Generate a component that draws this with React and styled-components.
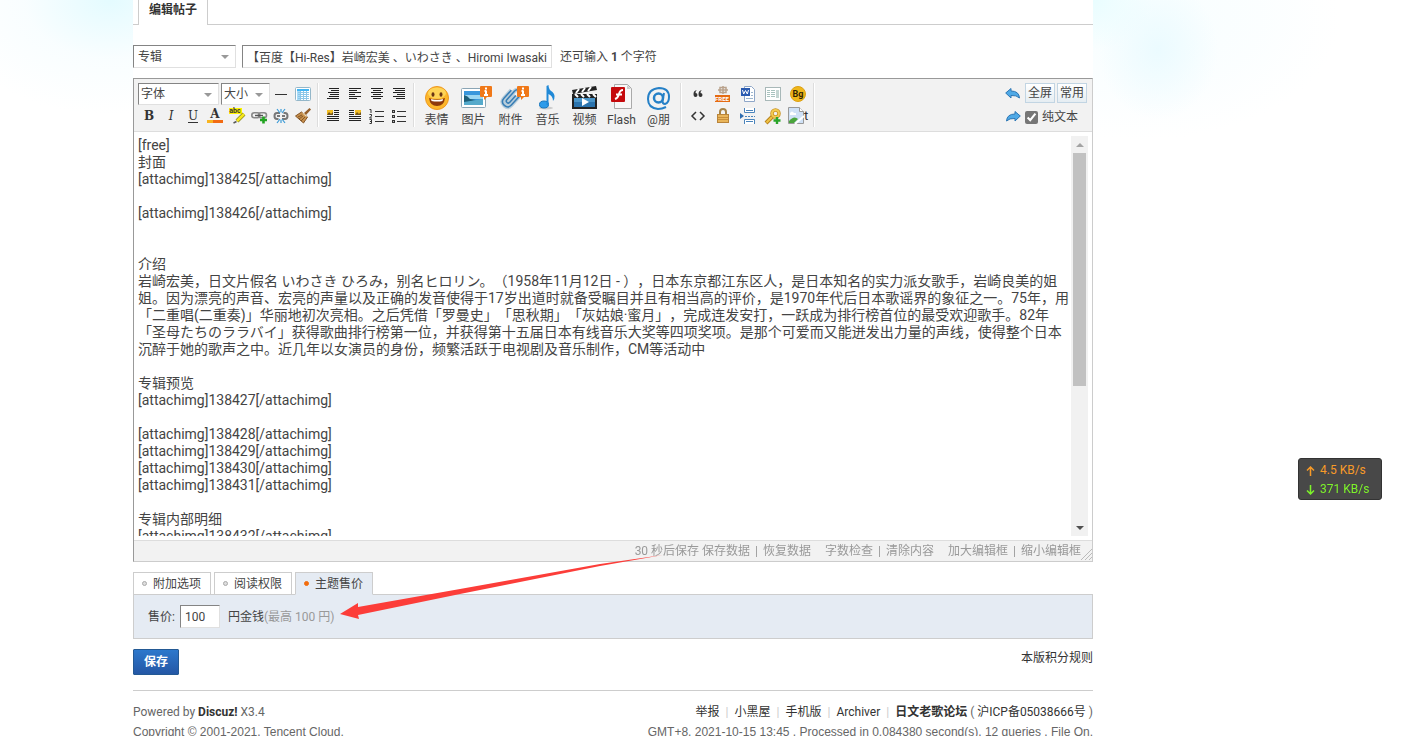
import React from 'react';
import styled, { createGlobalStyle, css } from 'styled-components';

const GlobalStyle = createGlobalStyle`
  *, *::before, *::after { box-sizing: border-box; }
  body {
    margin: 0;
    color: #444;
    font: 12px/18px Roboto, "Noto Sans CJK SC", sans-serif;
    text-spacing-trim: space-all;
    background:
      radial-gradient(ellipse 170px 115px at 110px 0, #e4fbff, rgba(246, 253, 255, 0.7) 50%, transparent) no-repeat,
      radial-gradient(ellipse 60px 50px at 1093px 0, #e9fdff, transparent) no-repeat,
      radial-gradient(ellipse 60px 70px at 1158px 50px, rgba(232, 250, 255, 0.8), transparent) no-repeat,
      radial-gradient(ellipse 200px 120px at 1140px 20px, #f7feff, rgba(250, 254, 255, 0.8) 60%, transparent) no-repeat,
      #fff;
  }
  button, input, select, textarea { font: inherit; color: inherit; margin: 0; text-spacing-trim: inherit; }
  a { color: inherit; text-decoration: none; }
`;

const Page = styled.main`
  position: relative;
  margin: 0 320px 0 133px;
  background: #fff;
`;

const TopTabs = styled.nav`
  display: flex;
  height: 25px;
  padding-left: 5px;
  border-bottom: 1px solid #cdcdcd;
`;

const TopTab = styled.a`
  height: 25px;
  padding: 1px 10px 0;
  border: solid #cdcdcd;
  border-width: 0 1px;
  background: #fff;
  color: #333;
  font-weight: 700;
`;

const sunken = css`
  border: 1px solid;
  border-color: #848484 #e0e0e0 #e0e0e0 #848484;
  background: #fff;
  outline: 0;
`;

const TitleRow = styled.div`
  display: flex;
  align-items: center;
  gap: 6px;
  margin: 20px 0 10px;
`;

const SelectBox = styled.span`
  position: relative;
  flex: none;
  width: ${(p) => p.$width}px;
  height: ${(p) => p.$height}px;
  &::after {
    content: "";
    position: absolute;
    right: 7px;
    top: 10px;
    border: 4px solid transparent;
    border-top-color: #999;
    border-bottom: 0;
    pointer-events: none;
  }
`;

const Select = styled.select`
  ${sunken}
  display: block;
  width: 100%;
  height: 100%;
  padding: 0 ${(p) => (p.$tight ? 2 : 4)}px;
  appearance: none;
  border-radius: 0;
`;

const TextInput = styled.input`
  ${sunken}
  width: ${(p) => p.$width}px;
  height: 23px;
  padding: 0 4px;
`;

const Remaining = styled.span`
  margin-left: 2px;
`;

const Editor = styled.section`
  border: 1px solid;
  border-color: #999 #ccc #ccc #999;
`;

const Toolbar = styled.div`
  display: flex;
  height: 53px;
  padding: 4px 5px 4px 4px;
  background: #f2f2f2;
  border-bottom: 1px solid #ddd;
`;

const Group = styled.div`
  display: grid;
  grid-template-columns: repeat(${(p) => p.$cols}, ${(p) => p.$cell}px);
  grid-template-rows: 22px 22px;
  flex: none;
`;

const FontRow = styled.div`
  display: flex;
  gap: 2px;
  grid-column: span 6;
`;

const Divider = styled.span`
  flex: none;
  width: 2px;
  margin: 0 3px;
  border-left: 1px solid #ddd;
  border-right: 1px solid #fff;
`;

const Tool = styled.button`
  display: flex;
  align-items: center;
  justify-content: center;
  min-width: 0;
  padding: 0;
  border: 0;
  background: none;
  svg { display: block; flex: none; overflow: visible; }
`;

const BigTool = styled(Tool)`
  flex-direction: column;
  justify-content: flex-start;
  grid-row: span 2;
  height: 44px;
  line-height: 14px;
  white-space: nowrap;
  svg { margin: 1px 0 3px; }
`;

const ToolbarEnd = styled.div`
  display: grid;
  grid-template-columns: 20px 30px 30px;
  grid-template-rows: 20px 20px;
  gap: 4px 2px;
  margin-left: auto;
`;

const ViewButton = styled.button`
  padding: 0;
  border: 1px solid #c2d5e3;
  background: linear-gradient(#fff, #e5edf2);
  line-height: 18px;
  white-space: nowrap;
`;

const PlainText = styled.label`
  display: flex;
  align-items: center;
  gap: 4px;
  grid-column: span 2;
  white-space: nowrap;
  input { width: 13px; height: 13px; accent-color: #767676; }
`;

const Area = styled.div`
  display: flex;
  height: 408px;
  padding: 4px;
  background: #fff;
`;

const Message = styled.textarea`
  flex: 1;
  min-width: 0;
  padding: 1px 0 0;
  border: 0;
  outline: 0;
  resize: none;
  overflow: auto;
  scrollbar-width: none;
  white-space: pre;
  font-size: 14px;
  line-height: 17px;
`;

const ScrollTrack = styled.div`
  display: flex;
  flex-direction: column;
  width: 17px;
  background: #f1f1f1;
  &::before, &::after {
    content: "";
    width: 8px;
    margin: 7px auto 6px;
    border: 4px solid transparent;
    border-top: 0;
    border-bottom-color: #a3a3a3;
  }
  &::after {
    margin-top: auto;
    border-top: 4px solid #505050;
    border-bottom: 0;
  }
`;

const ScrollThumb = styled.div`
  width: 13px;
  height: 233px;
  margin: 0 auto;
  background: #c1c1c1;
`;

const StatusBar = styled.div`
  display: flex;
  justify-content: flex-end;
  gap: 14px;
  height: 21px;
  padding: 1px 0 0;
  border-top: 1px solid #ddd;
  background: #f2f2f2;
  color: #999;
  svg { align-self: flex-end; margin-left: -14px; }
`;

const Piped = styled.span`
  display: flex;
  gap: 5px;
`;

const SaveState = styled.span`
  margin-right: -2px;
`;

const OptionTabs = styled.div`
  display: flex;
  gap: 3px;
  margin-top: 10px;
`;

const OptionTab = styled.button`
  display: flex;
  align-items: center;
  width: 78px;
  height: 23px;
  margin-bottom: -1px;
  padding: 0 8px;
  gap: 6px;
  z-index: 1;
  border: 1px solid #cdcdcd;
  border-bottom-color: ${(p) => (p.$active ? '#e5ebf3' : '#cdcdcd')};
  background: ${(p) => (p.$active ? '#e5ebf3' : '#fff')};
  white-space: nowrap;
  &::before {
    content: "";
    flex: none;
    width: 5px;
    height: 5px;
    border-radius: 50%;
    border: 1px solid ${(p) => (p.$active ? '#f26c0d' : '#aaa')};
    background: ${(p) => (p.$active ? '#f26c0d' : '#ddd')};
  }
`;

const OptionPanel = styled.div`
  display: flex;
  align-items: center;
  gap: 5px;
  height: 45px;
  padding: 0 14px;
  border: 1px solid #cdcdcd;
  background: #e5ebf3;
`;

const PriceUnit = styled.span`
  margin-left: 3px;
`;

const Muted = styled.span`
  color: #999;
`;

const SaveRow = styled.div`
  display: flex;
  justify-content: space-between;
  margin: 10px 0 15px;
  color: #333;
`;

const SaveButton = styled.button`
  width: 46px;
  height: 26px;
  padding: 0;
  border: 1px solid #235994;
  border-radius: 1px;
  background: linear-gradient(#2d78cc, #2457a5);
  color: #fff;
  font-weight: 700;
`;

const Footer = styled.footer`
  display: flex;
  justify-content: space-between;
  height: 46px;
  padding-top: 11px;
  border-top: 1px solid #cdcdcd;
  color: #666;
  line-height: 20px;
  overflow: hidden;
  p { margin: 0; }
  b, a { color: #333; }
`;

const FootRight = styled.div`
  text-align: right;
`;

const Pipe = styled.span`
  margin: 0 6px;
  color: #ccc;
`;

const SmallPrint = styled.p`
  font-family: "Liberation Sans", sans-serif;
`;

const Pointer = styled.svg`
  position: absolute;
  left: 207px;
  top: 550px;
  z-index: 2;
  pointer-events: none;
`;

const NetSpeed = styled.aside`
  position: fixed;
  right: 31px;
  top: 458px;
  width: 84px;
  height: 42px;
  padding: 2px 7px;
  border: 1px solid #333;
  border-radius: 3px;
  background: #484848;
  line-height: 19px;
`;

const SpeedRow = styled.div`
  display: flex;
  align-items: center;
  gap: 5px;
  color: ${(p) => p.$color};
  white-space: nowrap;
`;

const Svg = ({ w = 16, h = 16, children }) => (
  <svg width={w} height={h} viewBox={`0 0 ${w} ${h}`} fill="none" aria-hidden="true">{children}</svg>
);

const Lines = ({ rows, children }) => (
  <Svg>
    <path stroke="#222" d={rows.map(([x, w], i) => `M${x} ${2.5 + i * 2}h${w}`).join('')} />
    {children}
  </Svg>
);

const serif = { fontFamily: '"DejaVu Serif", serif' };

const Letter = ({ children, ...rest }) => (
  <text x="8" y="12" textAnchor="middle" fontSize="12" fontWeight="700" fill="#333" style={serif} {...rest}>{children}</text>
);

const RuleIcon = () => <Svg><path stroke="#333" d="M2 8.5h12" /></Svg>;

const TableIcon = () => (
  <Svg>
    <rect x=".5" y="1.5" width="15" height="13" rx="1" fill="#fff" stroke="#94b7c9" />
    <path fill="#43b5f3" d="M2 3h12v2H2z" /><path fill="#a9dcf8" d="M2 5h3v9H2z" />
    <path stroke="#8cc6e8" d="M5.500 5v9M8.500 5v9M11.500 5v9M3 6.500h11M3 8.500h11M3 10.500h11M3 12.500h11" />
  </Svg>
);

const BoldIcon = () => <Svg><Letter>B</Letter></Svg>;
const ItalicIcon = () => <Svg><Letter fontStyle="italic" fontWeight="400">I</Letter></Svg>;
const UnderlineIcon = () => <Svg><Letter y="12" fontWeight="400">U</Letter><path stroke="#333" d="M3 14.500h10" /></Svg>;

const ColorIcon = () => (
  <Svg>
    <Letter y="10">A</Letter>
    <path fill="#f8b420" d="M0 12h8v3H0z" /><path fill="#f26b13" d="M6 12h10v3H6z" />
  </Svg>
);

const HighlightIcon = () => (
  <Svg>
    <path fill="#fff200" d="M0 0h13v6H0z" />
    <text x="6" y="5" textAnchor="middle" fontSize="7" fontWeight="700" fill="#333">abc</text>
    <path stroke="#8a8a20" strokeWidth="4" d="M15 6l-7 7" />
    <path stroke="#f6e71c" strokeWidth="2.500" d="M15 6l-7 7" />
    <path stroke="#555" strokeWidth="1.500" d="M7.500 13.500l-3 1.500" />
  </Svg>
);

const LinkIcon = () => (
  <Svg>
    <rect x=".8" y="4.800" width="8" height="5" rx="2.500" stroke="#888" strokeWidth="1.600" />
    <rect x="7.500" y="4.800" width="8" height="5" rx="2.500" stroke="#888" strokeWidth="1.600" />
    <path stroke="#555" strokeWidth="1.400" d="M4 7.500h8" />
    <path stroke="#21a321" strokeWidth="2.600" d="M12.500 8.500v7M9 12h7" />
  </Svg>
);

const UnlinkIcon = () => (
  <Svg>
    <path stroke="#777" strokeWidth="2" d="M7 5H4Q1.500 5 1.500 8T4 11h1.500M4 8h3M9 11h3q2.500 0 2.500-3T12 5h-1.500M9 8h3" />
    <path stroke="#3c9bd6" strokeWidth="1.200" d="M4 1l3 4M8 1v3M12 1L9 5M4 15l3-4M8 15v-3M12 15l-3-4" />
  </Svg>
);

const BrushIcon = () => (
  <Svg>
    <path fill="#96602b" d="M14.500 0L16 1.500 11 7 9 5z" />
    <path fill="#c78f4b" stroke="#845425" d="M6.500 4l6 5-4 6-8-7z" />
    <path stroke="#fff0c4" d="M7.500 5l4 3.500" /><path stroke="#66401b" strokeWidth=".7" d="M7 7l-4 2M8 8l-4 3M10 9l-4 4" />
  </Svg>
);

const AutoIcon = () => <Lines rows={[[4, 10], [6, 8], [3, 11], [5, 9], [4, 10], [2, 12]]} />;
const LeftIcon = () => <Lines rows={[[2, 12], [2, 8], [2, 12], [2, 6], [2, 12], [2, 8]]} />;
const CenterIcon = () => <Lines rows={[[2, 12], [4, 8], [2, 12], [4, 8], [2, 12], [4, 8]]} />;
const RightIcon = () => <Lines rows={[[2, 12], [4, 10], [2, 12], [6, 8], [2, 12], [5, 9]]} />;

const FloatIcon = ({ x }) => (
  <Lines rows={[[2, 12], [2, 12], [2, 12], [2, 12], [2, 12], [2, 12]]}>
    <path fill="#f2f2f2" d={`M${x - 1} 1h8v7h-8z`} />
    <path fill="#f3be22" d={`M${x} 2h6v5h-6z`} /><path fill="#72541b" d={`M${x} 7l2-3 2 2 2-2v3z`} />
  </Lines>
);

const OrderedIcon = () => (
  <Svg>
    <path stroke="#333" d="M6 3.500h9M6 8.500h9M6 13.500h9" />
    <path stroke="#333" d="M.5 1.500h1.500V5M.5 6.500h2v1.500l-2 2h2.500M.5 11.500h2v4h-2M1 13.500h1.500" />
  </Svg>
);

const BulletIcon = () => (
  <Svg>
    <path stroke="#333" d="M6 3.500h9M6 8.500h9M6 13.500h9" />
    <path fill="#333" d="M1 2h3v3H1zM1 7h3v3H1zM1 12h3v3H1z" /><path fill="#bbb" d="M2 3h1v1H2zM2 8h1v1H2zM2 13h1v1H2z" />
  </Svg>
);

const Badge = ({ x, y }) => (
  <g transform={`translate(${x} ${y})`}>
    <path fill="#f07818" d="M1 0h10q1 0 1 1v9q0 1-1 1H7l-3 3v-3H1q-1 0-1-1V1q0-1 1-1z" />
    <path stroke="#fff" strokeWidth="2" d="M6 1.500v2M6 4.500V9M4.500 5H6M4 9h4" />
  </g>
);

const SmileIcon = () => (
  <Svg w={26} h={26}>
    <circle cx="13" cy="14" r="11.500" fill="#fcb72b" stroke="#ef9820" />
    <ellipse cx="13" cy="9" rx="9" ry="5.500" fill="#ffe06b" opacity=".7" />
    <ellipse cx="9" cy="10.500" rx="1.500" ry="2.300" fill="#693414" /><ellipse cx="17" cy="10.500" rx="1.500" ry="2.300" fill="#693414" />
    <path fill="#8e3a0c" d="M5 14q8 3 16 0-1 8-8 8t-8-8z" /><path fill="#fff" d="M7 15q6 2 12 0l-.5 2q-5 1-11 0z" />
  </Svg>
);

const PictureIcon = () => (
  <Svg w={26} h={26}>
    <rect x=".5" y="4.500" width="24" height="19" rx="1" fill="#fff" stroke="#8aa5b5" />
    <path fill="#3896dc" d="M3 7h19v14H3z" /><path fill="#9bd6f2" d="M3 11h19v4H3z" />
    <path fill="#1d5f79" d="M3 11q4 1 6 4l6 1-12 3z" /><path fill="#55aacb" d="M3 18l19-3v6H3z" />
    <Badge x={19} y={2} />
  </Svg>
);

const ClipIcon = () => (
  <Svg w={26} h={26}>
    <g transform="rotate(42 13 14)" strokeWidth="2">
      <path stroke="#b9cedb" strokeWidth="4" d="M8 8v11q0 5 5 5t5-5V7q0-4-3.500-4T11 7v11q0 2 2 2t2-2V9" />
      <path stroke="#367db5" strokeWidth="1.500" d="M8 8v11q0 5 5 5t5-5V7q0-4-3.500-4T11 7v11q0 2 2 2t2-2V9" />
    </g>
    <Badge x={19} y={2} />
  </Svg>
);

const MusicIcon = () => (
  <Svg w={26} h={26}>
    <ellipse cx="11" cy="24" rx="7" ry="1.500" fill="#ccc" />
    <ellipse cx="9" cy="20.500" rx="4.500" ry="3.500" fill="#2d9bea" stroke="#1776bd" />
    <path fill="#2089d7" d="M11.500 2l2-1q0 5 4 7 4 4 .5 9 0-5-4.500-7v11h-2z" />
  </Svg>
);

const VideoIcon = () => (
  <Svg w={26} h={26}>
    <path fill="#222" d="M0 6l24-4 1 4L1 10z" /><path fill="#222" d="M0 10h25v15H0z" />
    <path stroke="#fff" strokeWidth="2" d="M4 9l3-4M10 8l3-4M16 7l3-4M3 10l3 3M9 10l3 3M15 10l3 3M21 10l3 3" />
    <path fill="#2b74ae" d="M2 14h21v9H2z" /><path fill="#69b5e3" d="M2 14h21v4H2z" opacity=".5" />
    <path fill="#fff" d="M10 14l7 4-7 4z" />
  </Svg>
);

const FlashIcon = () => (
  <Svg w={26} h={26}>
    <path fill="#f8f8f8" stroke="#aaa" d="M5.500.500h13l4 4v20h-17z" /><path fill="#ccc" d="M18 1v4h4z" />
    <rect x="2" y="3" width="14" height="15" rx="1" fill="#c50a0d" />
    <path stroke="#fff" strokeWidth="2" d="M14 6q-3 0-4 4t-4 5M7 10.500h6" />
  </Svg>
);

const AtIcon = () => (
  <Svg w={26} h={26}>
    <g stroke="#2580c7">
      <circle cx="12.500" cy="14" r="4.500" strokeWidth="2.500" />
      <path strokeWidth="2" d="M18 9l-1.500 8q0 3 2.500 3 4-1 4-7 0-9-10-9Q2 5 2 15q0 9 10 10 4 0 8-2" />
    </g>
  </Svg>
);

const QuoteIcon = () => <Svg><path fill="#333" d="M7 4Q5.500 4.500 5.500 7q2 0 2 2T5.500 11 3.500 8Q3.500 4.500 7 4zM12 4q-1.500.500-1.500 3 2 0 2 2t-2 2-2-3Q8.500 4.500 12 4z" /></Svg>;
const CodeIcon = () => <Svg><path stroke="#333" strokeWidth="1.500" d="M6 4L2 8l4 4M10 4l4 4-4 4" /></Svg>;

const FreeIcon = () => (
  <Svg>
    <path stroke="#b9a28c" strokeWidth="1.500" d="M5 1.500h6v5H5zM3 4h10M8 0v8" />
    <rect x="0" y="9" width="15" height="7" fill="#e56a12" />
    <text x="7" y="15" textAnchor="middle" fontSize="6" fontWeight="700" fill="#fff">FREE</text>
  </Svg>
);

const LockIcon = () => (
  <Svg>
    <path stroke="#a78347" strokeWidth="2" d="M5 7V4q0-3 3-3t3 3v3" />
    <rect x="2.500" y="6.500" width="11" height="8" fill="#e9b55a" stroke="#b9843a" />
    <path stroke="#c88e3c" d="M3 9.500h10M3 11.500h10" />
  </Svg>
);

const WordIcon = () => (
  <Svg>
    <path fill="#fff" stroke="#8fa7c8" d="M4.500.500h7l3 3v12h-10z" /><path stroke="#9db5cd" d="M11 6.500h2M11 9.500h2M6 12.500h7" />
    <rect x="1" y="2" width="9" height="8" fill="#2b5bb0" />
    <path stroke="#fff" d="M2.500 4l1.200 4L5.500 4.500 7.300 8 8.500 4" />
  </Svg>
);

const PageBreakIcon = () => (
  <Svg>
    <path fill="#fff" d="M4 0h11v5H4zM4 11h11v5H4z" />
    <path stroke="#4b84bb" d="M4.500 0v4.500h10V0M4.500 16v-4.500h10V16M6 2.500h7M6 13.500h7" /><path fill="#2d6cb0" d="M0 5l4 3-4 3z" />
    <path stroke="#4b84bb" strokeDasharray="2 1" d="M5 8.500h10" />
  </Svg>
);

const ColumnsIcon = () => (
  <Svg>
    <rect x=".5" y="1.500" width="15" height="13" fill="#fff" stroke="#a8b8b8" />
    <path stroke="#a8c2be" d="M2 4.500h3M2 6.500h3M2 8.500h3M2 10.500h3M6 4.500h4M6 6.500h4M6 8.500h4M6 10.500h4" /><path fill="#c4d5d2" d="M11 4h3v8h-3z" />
  </Svg>
);

const KeyIcon = () => (
  <Svg>
    <path stroke="#b8831c" strokeWidth="4" d="M8 8l-7 7" /><path stroke="#f1c446" strokeWidth="2" d="M8 8l-6.500 6.500" />
    <circle cx="10.500" cy="5.500" r="3.500" stroke="#c99222" strokeWidth="3.500" /><circle cx="10.500" cy="5.500" r="3.500" stroke="#f3ca50" strokeWidth="2" />
    <path stroke="#2aa52a" strokeWidth="2.400" d="M12 9v7M8.500 12.500h7" />
  </Svg>
);

const BgIcon = () => (
  <Svg>
    <circle cx="8" cy="8" r="7.500" fill="#efb71b" stroke="#dda013" />
    <text x="8" y="11" textAnchor="middle" fontSize="9" fontWeight="700" fill="#332400">Bg</text>
  </Svg>
);

const BrokenImageIcon = () => (
  <Svg w={20} h={18}>
    <path fill="#cfe1f6" stroke="#999" d="M.500.500h11l4 4v12H.500z" /><path fill="#fff" stroke="#999" d="M11.500.500v4h4" />
    <path fill="#4aa53c" d="M1 14q5-6 9-2l-4 4H1z" /><path fill="#fff" d="M2 6q2-3 4 0h2v2H2z" /><path stroke="#fff" strokeWidth="2" d="M16 9l-9 8" />
    <text x="16" y="13" fontSize="13" fill="#333">t</text>
  </Svg>
);

const UndoIcon = () => (
  <Svg><path fill="#4fa9e6" stroke="#2c76b4" d="M.7 8L6 3.500v2.500q8 0 8.500 7-3-3-8.500-2.500V13z" /></Svg>
);
const RedoIcon = () => (
  <Svg><path fill="#4fa9e6" stroke="#2c76b4" d="M15.300 7L10 2.500v2.500q-8 0-8.500 7 3-3 8.500-2.500V12z" /></Svg>
);

const T = ({ name, icon: Icon, ...rest }) => <Tool type="button" aria-label={name}><Icon {...rest} /></Tool>;

const bigTools = [
  ['表情', SmileIcon], ['图片', PictureIcon], ['附件', ClipIcon], ['音乐', MusicIcon],
  ['视频', VideoIcon], ['Flash', FlashIcon], ['@朋', AtIcon],
];

const insertTools = [
  ['引用', QuoteIcon], ['免费信息', FreeIcon], ['Word', WordIcon], ['分栏', ColumnsIcon], ['背景', BgIcon],
  ['代码', CodeIcon], ['隐藏内容', LockIcon], ['分页', PageBreakIcon], ['密码', KeyIcon], ['插件', BrokenImageIcon],
];

const message = `[free]
封面
[attachimg]138425[/attachimg]

[attachimg]138426[/attachimg]


介绍
岩崎宏美，日文片假名 いわさき ひろみ，别名ヒロリン。（1958年11月12日 - ），日本东京都江东区人，是日本知名的实力派女歌手，岩崎良美的姐
姐。因为漂亮的声音、宏亮的声量以及正确的发音使得于17岁出道时就备受瞩目并且有相当高的评价，是1970年代后日本歌谣界的象征之一。75年，用
「二重唱(二重奏)」华丽地初次亮相。之后凭借「罗曼史」「思秋期」「灰姑娘·蜜月」，完成连发安打，一跃成为排行榜首位的最受欢迎歌手。82年
「圣母たちのララバイ」获得歌曲排行榜第一位，并获得第十五届日本有线音乐大奖等四项奖项。是那个可爱而又能迸发出力量的声线，使得整个日本
沉醉于她的歌声之中。近几年以女演员的身份，频繁活跃于电视剧及音乐制作，CM等活动中

专辑预览
[attachimg]138427[/attachimg]

[attachimg]138428[/attachimg]
[attachimg]138429[/attachimg]
[attachimg]138430[/attachimg]
[attachimg]138431[/attachimg]

专辑内部明细
[attachimg]138432[/attachimg]`;

export default function App() {
  return (
    <>
      <GlobalStyle />
      <Page>
        <TopTabs><TopTab href="#edit">编辑帖子</TopTab></TopTabs>

        <TitleRow>
          <SelectBox $width={103} $height={23}>
            <Select aria-label="主题分类"><option>专辑</option></Select>
          </SelectBox>
          <TextInput $width={310} aria-label="标题" defaultValue="【百度【Hi-Res】岩崎宏美 、いわさき 、Hiromi Iwasaki" />
          <Remaining>还可输入 <b>1</b> 个字符</Remaining>
        </TitleRow>

        <Editor>
          <Toolbar>
            <Group $cols={8} $cell={22}>
              <FontRow>
                <SelectBox $width={81} $height={22}><Select $tight aria-label="字体"><option>字体</option></Select></SelectBox>
                <SelectBox $width={49} $height={22}><Select $tight aria-label="大小"><option>大小</option></Select></SelectBox>
              </FontRow>
              <T name="分隔线" icon={RuleIcon} />
              <T name="表格" icon={TableIcon} />
              <T name="粗体" icon={BoldIcon} />
              <T name="斜体" icon={ItalicIcon} />
              <T name="下划线" icon={UnderlineIcon} />
              <T name="颜色" icon={ColorIcon} />
              <T name="背景色" icon={HighlightIcon} />
              <T name="链接" icon={LinkIcon} />
              <T name="移除链接" icon={UnlinkIcon} />
              <T name="清除格式" icon={BrushIcon} />
            </Group>
            <Divider />
            <Group $cols={4} $cell={22}>
              <T name="自动排版" icon={AutoIcon} />
              <T name="居左" icon={LeftIcon} />
              <T name="居中" icon={CenterIcon} />
              <T name="居右" icon={RightIcon} />
              <T name="左浮动" icon={FloatIcon} x={2} />
              <T name="右浮动" icon={FloatIcon} x={8} />
              <T name="排序列表" icon={OrderedIcon} />
              <T name="未排序列表" icon={BulletIcon} />
            </Group>
            <Divider />
            <Group $cols={7} $cell={37}>
              {bigTools.map(([label, Icon]) => (
                <BigTool key={label} type="button"><Icon />{label}</BigTool>
              ))}
            </Group>
            <Divider />
            <Group $cols={5} $cell={25}>
              {insertTools.map(([name, Icon]) => <T key={name} name={name} icon={Icon} />)}
            </Group>
            <Divider />
            <ToolbarEnd>
              <T name="撤销" icon={UndoIcon} />
              <ViewButton type="button">全屏</ViewButton>
              <ViewButton type="button">常用</ViewButton>
              <T name="重做" icon={RedoIcon} />
              <PlainText><input type="checkbox" defaultChecked />纯文本</PlainText>
            </ToolbarEnd>
          </Toolbar>
          <Area>
            <Message aria-label="内容" defaultValue={message} spellCheck={false} />
            <ScrollTrack aria-hidden="true"><ScrollThumb /></ScrollTrack>
          </Area>
          <StatusBar>
            <Piped><SaveState>30 秒后保存</SaveState><a href="#save">保存数据</a>|<a href="#restore">恢复数据</a></Piped>
            <Piped><a href="#check">字数检查</a>|<a href="#clear">清除内容</a></Piped>
            <Piped><a href="#grow">加大编辑框</a>|<a href="#shrink">缩小编辑框</a></Piped>
            <Svg w={11} h={12}><path stroke="#bbb" d="M0 11L11 0M4 11l7-7M8 11l3-3" /></Svg>
          </StatusBar>
        </Editor>

        <OptionTabs>
          <OptionTab type="button">附加选项</OptionTab>
          <OptionTab type="button">阅读权限</OptionTab>
          <OptionTab type="button" $active>主题售价</OptionTab>
        </OptionTabs>
        <OptionPanel>
          <label htmlFor="price">售价:</label>
          <TextInput id="price" $width={40} defaultValue="100" />
          <PriceUnit>円金钱<Muted>(最高 100 円)</Muted></PriceUnit>
        </OptionPanel>

        <SaveRow>
          <SaveButton type="button">保存</SaveButton>
          <a href="#rules">本版积分规则</a>
        </SaveRow>

        <Footer>
          <div>
            <p>Powered by <b>Discuz!</b> X3.4</p>
            <SmallPrint>Copyright © 2001-2021, Tencent Cloud.</SmallPrint>
          </div>
          <FootRight>
            <p>
              <a href="#report">举报</a><Pipe>|</Pipe><a href="#darkroom">小黑屋</a><Pipe>|</Pipe>
              <a href="#mobile">手机版</a><Pipe>|</Pipe><a href="#archiver">Archiver</a><Pipe>|</Pipe>
              <a href="#home"><b>日文老歌论坛</b></a> ( <a href="#icp">沪ICP备05038666号</a> )
            </p>
            <SmallPrint>GMT+8, 2021-10-15 13:45 , Processed in 0.084380 second(s), 12 queries , File On.</SmallPrint>
          </FootRight>
        </Footer>

        <Pointer width="325" height="72" viewBox="0 0 325 72" aria-hidden="true">
          <path fill="#fc3d39" d="M0 64L18 53v4l102-18L260 14 323 5 260 16 120 44 18 65l1 4z" />
        </Pointer>
      </Page>

      <NetSpeed>
        <SpeedRow $color="#f79a28">
          <Svg w={9} h={10}><path stroke="currentColor" strokeWidth="1.500" d="M4.500 10V1M1 4.500L4.500 1 8 4.500" /></Svg>4.5 KB/s
        </SpeedRow>
        <SpeedRow $color="#7df32a">
          <Svg w={9} h={10}><path stroke="currentColor" strokeWidth="1.500" d="M4.500 0v9M1 5.500L4.500 9 8 5.500" /></Svg>371 KB/s
        </SpeedRow>
      </NetSpeed>
    </>
  );
}
